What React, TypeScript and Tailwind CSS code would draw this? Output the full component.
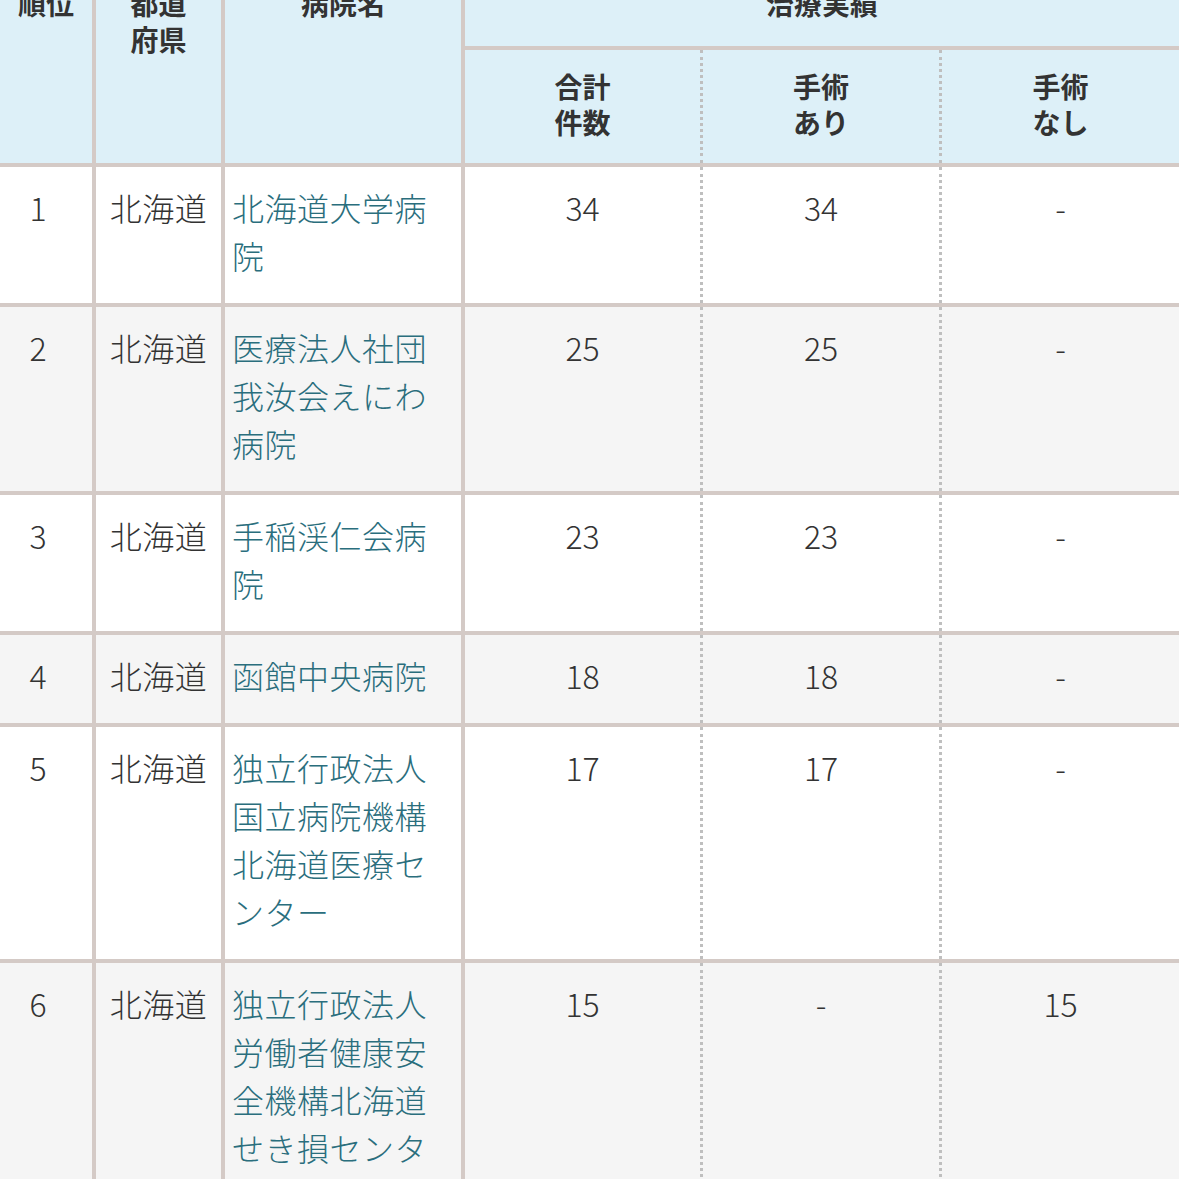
import React from 'react';

type Row = { rank: number; pref: string; name: string; total: string; op: string; noOp: string };

const ROWS: Row[] = [
  { rank: 1, pref: '北海道', name: '北海道大学病院', total: '34', op: '34', noOp: '-' },
  { rank: 2, pref: '北海道', name: '医療法人社団我汝会えにわ病院', total: '25', op: '25', noOp: '-' },
  { rank: 3, pref: '北海道', name: '手稲渓仁会病院', total: '23', op: '23', noOp: '-' },
  { rank: 4, pref: '北海道', name: '函館中央病院', total: '18', op: '18', noOp: '-' },
  { rank: 5, pref: '北海道', name: '独立行政法人国立病院機構北海道医療センター', total: '17', op: '17', noOp: '-' },
  { rank: 6, pref: '北海道', name: '独立行政法人労働者健康安全機構北海道せき損センター', total: '15', op: '-', noOp: '15' },
];

const GRID = 'grid grid-cols-[96px_129px_240px_238px_239px_1fr]';
const SOLID = 'border-r-4 border-[#d4cac6]';
const DOTTED = 'border-r-[3px] border-dotted border-[#bfbfbf]';
const CELL = 'pt-[16px] pb-[24px]';

export default function App() {
  return (
    <div className="h-[1179px] w-[1179px] overflow-hidden bg-white font-['Noto_Sans_CJK_JP','Noto_Sans',sans-serif] text-[#333]">
      <div className="-mt-[33px]">
        {/* 見出し */}
        <div className={`${GRID} grid-rows-[auto_auto] border-b-4 border-[#d4cac6] bg-[#ddf0f8] text-[28px] font-bold leading-[36px]`}>
          <div className={`row-span-2 ${SOLID} pt-[18px] text-center`}>順位</div>
          <div className={`row-span-2 ${SOLID} pt-[18px] text-center`}>都道<br />府県</div>
          <div className={`row-span-2 ${SOLID} pt-[18px] text-center`}>病院名</div>
          <div className="col-span-3 border-b-4 border-[#d4cac6] pt-[18px] pb-[25px] text-center">治療実績</div>
          <div className={`${DOTTED} pt-[18px] pb-[23px] text-center`}>合計<br />件数</div>
          <div className={`${DOTTED} pt-[18px] pb-[23px] text-center`}>手術<br />あり</div>
          <div className="pt-[18px] pb-[23px] text-center">手術<br />なし</div>
        </div>

        {/* データ行 */}
        {ROWS.map((r, i) => (
          <div key={r.rank}
            className={`${GRID} border-b-4 border-[#d4cac6] text-[32px] font-light leading-[48px] ${i % 2 === 1 ? 'bg-[#f5f5f5]' : 'bg-white'}`}>
            <div className={`${SOLID} ${CELL} pr-4 text-center`}>{r.rank}</div>
            <div className={`${SOLID} ${CELL} text-center tracking-[0.5px]`}>{r.pref}</div>
            <div className={`${SOLID} ${CELL} pl-[7px] pr-[4px] tracking-[0.5px] text-[#2a6e7d]`}>{r.name}</div>
            <div className={`${DOTTED} ${CELL} text-center`}>{r.total}</div>
            <div className={`${DOTTED} ${CELL} text-center`}>{r.op}</div>
            <div className={`${CELL} text-center`}>{r.noOp}</div>
          </div>
        ))}
      </div>
    </div>
  );
}
